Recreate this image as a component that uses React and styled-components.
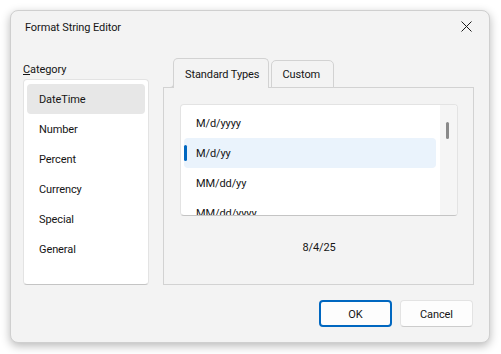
import styled, { createGlobalStyle } from 'styled-components';

const GlobalStyle = createGlobalStyle`
	body {
		margin: 0;
		background: #ffffff;
		font-family: Roboto, 'Noto Sans', sans-serif;
		font-size: 11px;
		letter-spacing: -0.1px;
		color: #151515;
	}
`;

const categories = ['DateTime', 'Number', 'Percent', 'Currency', 'Special', 'General'];
const formats = ['M/d/yyyy', 'M/d/yy', 'MM/dd/yy', 'MM/dd/yyyy'];

const CloseIcon = () => (
	<svg width="11" height="11" viewBox="0 0 11 11">
		<path d="M0.5 0.5 L10.5 10.5 M10.5 0.5 L0.5 10.5" stroke="#1b1b1b" strokeWidth="1" fill="none" />
	</svg>
);

const App = () => {
	return (
		<>
			<GlobalStyle />
			<Page>
				<Window>
					<TitleBar>
						<Title>Format String Editor</Title>
						<CloseButton>
							<CloseIcon />
						</CloseButton>
					</TitleBar>
					<Body>
						<LeftColumn>
							<Label>
								<u>C</u>ategory
							</Label>
							<CategoryList>
								{categories.map((c, i) => (
									<CategoryItem key={c} $selected={i === 0}>
										{c}
									</CategoryItem>
								))}
							</CategoryList>
						</LeftColumn>
						<RightColumn>
							<TabRow>
								<Tab $active>Standard Types</Tab>
								<Tab>Custom</Tab>
							</TabRow>
							<TabPanel>
								<FormatList>
									<FormatItems>
										{formats.map((f, i) => (
											<FormatItem key={f} $selected={i === 1}>
												{f}
											</FormatItem>
										))}
									</FormatItems>
									<ScrollTrack>
										<ScrollThumb />
									</ScrollTrack>
								</FormatList>
								<Preview>8/4/25</Preview>
							</TabPanel>
						</RightColumn>
					</Body>
					<Footer>
						<Button $primary>OK</Button>
						<Button>Cancel</Button>
					</Footer>
				</Window>
			</Page>
		</>
	);
};

export default App;

const Page = styled.div`
	padding: 10px 0 0 10px;
	height: 354px;
	box-sizing: border-box;
`;

const Window = styled.div`
	width: 480px;
	height: 333px;
	box-sizing: border-box;
	display: flex;
	flex-direction: column;
	background: #f3f3f3;
	border: 1px solid #cfcfcf;
	border-radius: 8px;
	box-shadow: 0 3px 10px rgba(0, 0, 0, 0.28);
	overflow: hidden;
`;

const TitleBar = styled.div`
	display: flex;
	align-items: center;
	justify-content: space-between;
	height: 31px;
	padding: 0 17px 0 14px;
`;

const Title = styled.div`
	line-height: 16px;
	padding-top: 2px;
`;

const CloseButton = styled.div`
	display: flex;
	width: 11px;
	height: 11px;
`;

const Body = styled.div`
	display: flex;
	gap: 14px;
	padding: 16px 15px 0 12px;
`;

const LeftColumn = styled.div`
	display: flex;
	flex-direction: column;
	width: 126px;
	padding-top: 2px;
`;

const Label = styled.div`
	height: 18px;
	line-height: 20px;
	margin-bottom: 1px;
`;

const CategoryList = styled.div`
	height: 206px;
	box-sizing: border-box;
	padding: 4px 3px;
	background: #ffffff;
	border: 1px solid #e3e3e3;
	border-bottom-color: #c4c4c4;
	border-radius: 4px;
`;

const CategoryItem = styled.div`
	height: 30px;
	box-sizing: border-box;
	padding: 1px 0 0 12px;
	line-height: 30px;
	border-radius: 4px;
	background: ${(p) => (p.$selected ? '#e7e7e7' : 'transparent')};
`;

const RightColumn = styled.div`
	flex: 1;
	display: flex;
	flex-direction: column;
`;

const TabRow = styled.div`
	display: flex;
	align-items: flex-end;
	gap: 2px;
	padding-left: 10px;
	height: 30px;
	margin-bottom: -1px;
	position: relative;
	z-index: 1;
`;

const Tab = styled.div`
	position: relative;
	height: ${(p) => (p.$active ? '30px' : '28px')};
	line-height: ${(p) => (p.$active ? '31px' : '28px')};
	box-sizing: border-box;
	padding: ${(p) => (p.$active ? '0 9px 0 11px' : '0 13px 0 10px')};
	background: #f3f3f3;
	border: 1px solid #d2d2d2;
	border-bottom: ${(p) => (p.$active ? 'none' : '1px solid #d2d2d2')};
	border-radius: 5px 5px 0 0;

	&::before {
		content: '';
		display: ${(p) => (p.$active ? 'block' : 'none')};
		position: absolute;
		left: -5px;
		bottom: 0;
		width: 4px;
		height: 4px;
		border-right: 1px solid #d2d2d2;
		border-bottom: 1px solid #d2d2d2;
		border-bottom-right-radius: 4px;
	}
`;

const TabPanel = styled.div`
	height: 198px;
	box-sizing: border-box;
	display: flex;
	flex-direction: column;
	padding: 16px 15px 0 16px;
	border: 1px solid #d2d2d2;
`;

const FormatList = styled.div`
	display: flex;
	height: 112px;
	box-sizing: border-box;
	background: #ffffff;
	border: 1px solid #e3e3e3;
	border-bottom-color: #c4c4c4;
	border-radius: 4px;
	overflow: hidden;
`;

const FormatItems = styled.div`
	flex: 1;
	padding: 3px 4px 0 3px;
	overflow: hidden;
`;

const FormatItem = styled.div`
	position: relative;
	height: 30px;
	box-sizing: border-box;
	padding: 1px 0 0 12px;
	line-height: 30px;
	border-radius: 4px;
	background: ${(p) => (p.$selected ? '#eaf3fc' : 'transparent')};

	&::before {
		content: '';
		display: ${(p) => (p.$selected ? 'block' : 'none')};
		position: absolute;
		left: 0;
		top: 7px;
		width: 3px;
		height: 16px;
		border-radius: 2px;
		background: #0067c0;
	}
`;

const ScrollTrack = styled.div`
	width: 17px;
	background: #f5f5f5;
	padding: 17px 0 0 6px;
	box-sizing: border-box;
`;

const ScrollThumb = styled.div`
	width: 3px;
	height: 17px;
	border-radius: 2px;
	background: #8a8a8a;
`;

const Preview = styled.div`
	margin-top: 24px;
	line-height: 16px;
	text-align: center;
`;

const Footer = styled.div`
	display: flex;
	justify-content: flex-end;
	gap: 8px;
	padding: 15px 16px 0 0;
`;

const Button = styled.div`
	width: 73px;
	height: 27px;
	box-sizing: border-box;
	display: flex;
	align-items: center;
	justify-content: center;
	padding-top: 1px;
	background: #fdfdfd;
	border-radius: 4px;
	border: ${(p) => (p.$primary ? '2px solid #0067c0' : '1px solid #e3e3e3')};
	border-bottom-color: ${(p) => (p.$primary ? '#0067c0' : '#cccccc')};
`;
